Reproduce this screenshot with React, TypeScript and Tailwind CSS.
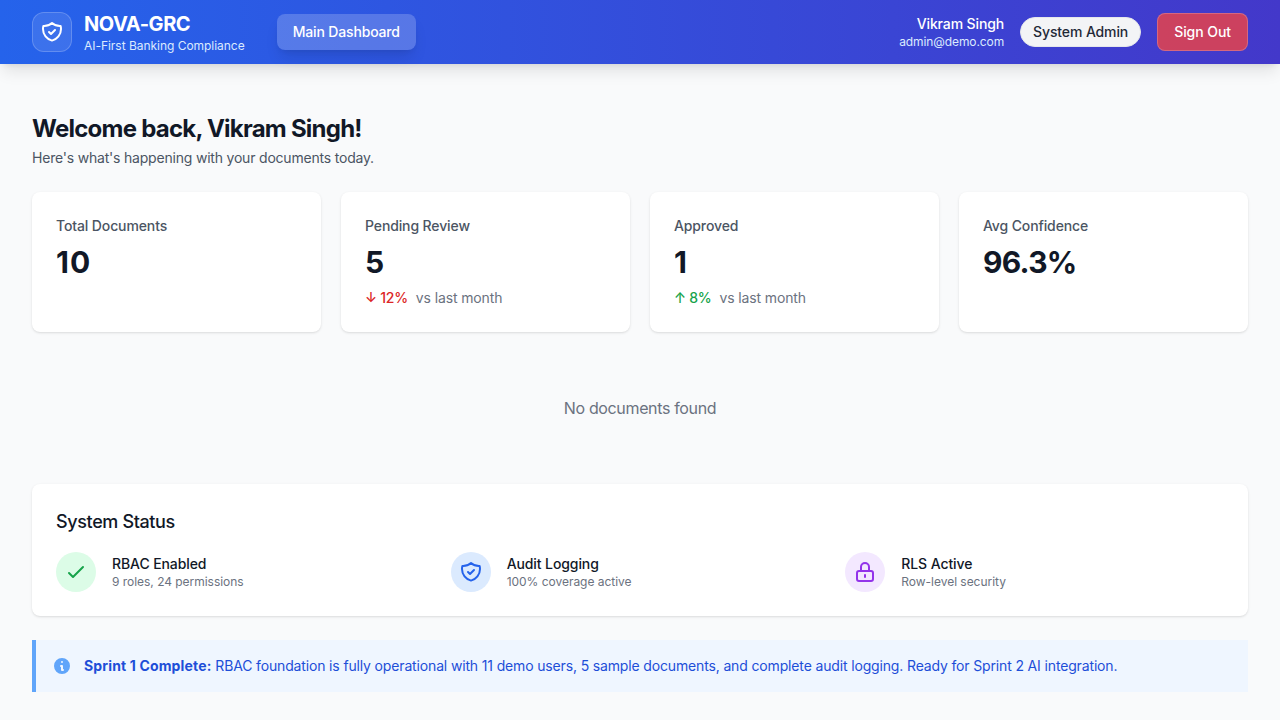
import type { ReactNode } from "react";

const SHIELD =
  "M9 12l2 2 4-4m5.618-4.016A11.955 11.955 0 0112 2.944a11.955 11.955 0 01-8.618 3.04A12.02 12.02 0 003 9c0 5.591 3.824 10.29 9 11.622 5.176-1.332 9-6.03 9-11.622 0-1.042-.133-2.052-.382-3.016z";
const CHECK = "M5 13l4 4L19 7";
const LOCK =
  "M12 15v2m-6 4h12a2 2 0 002-2v-6a2 2 0 00-2-2H6a2 2 0 00-2 2v6a2 2 0 002 2zm10-10V7a4 4 0 00-8 0v4h8z";

function OutlineIcon({ d, className }: { d: string; className: string }) {
  return (
    <svg className={`size-6 ${className}`} fill="none" stroke="currentColor" viewBox="0 0 24 24">
      <path d={d} strokeLinecap="round" strokeLinejoin="round" strokeWidth={2} />
    </svg>
  );
}

function Header() {
  return (
    <header className="flex h-16 items-center justify-between bg-linear-to-r/srgb from-[#2563eb] to-[#4338ca] px-8 shadow-lg">
      <div className="flex items-center">
        <div className="flex size-10 items-center justify-center rounded-xl border border-white/20 bg-white/10">
          <OutlineIcon d={SHIELD} className="text-white" />
        </div>
        <div className="ml-3">
          <div className="text-xl font-bold tracking-[-0.45px] text-white">NOVA-GRC</div>
          <div className="text-xs tracking-[-0.03px] text-[#dbeafe]">AI-First Banking Compliance</div>
        </div>
        <button className="ml-8 rounded-lg bg-white/20 px-4 py-2 text-sm font-[450] tracking-[-0.16px] text-white shadow-lg">
          Main Dashboard
        </button>
      </div>
      <div className="flex items-center gap-4">
        <div className="text-right">
          <div className="text-sm font-[450] tracking-[-0.12px] text-white">Vikram Singh</div>
          <div className="text-xs tracking-[-0.1px] text-[#dbeafe]">admin@demo.com</div>
        </div>
        <span className="rounded-full border border-[#e5e7eb] bg-[#f3f4f6] px-3 py-1 text-sm font-[450] tracking-[-0.12px] text-[#1f2937]">
          System Admin
        </span>
        <button className="rounded-lg border border-white/20 bg-[#ef4444]/80 px-4 py-2 text-sm font-[450] tracking-[-0.06px] text-white">
          Sign Out
        </button>
      </div>
    </header>
  );
}

type Trend = { up: boolean; value: string };

function StatCard({ label, value, tracking, trend }: { label: string; value: string; tracking: string; trend?: Trend }) {
  return (
    <div className="rounded-lg bg-white p-6 shadow-sm">
      <p className="text-sm font-[450] tracking-[-0.12px] text-[#4b5563]">{label}</p>
      <p className={`mt-2 text-3xl font-bold text-[#111827] ${tracking}`}>{value}</p>
      {trend && (
        <div className="mt-2 flex items-center text-sm">
          <span className={`font-[450] tracking-[-0.25px] ${trend.up ? "text-[#16a34a]" : "text-[#dc2626]"}`}>
            {trend.up ? "↑" : "↓"} {trend.value}
          </span>
          <span className="ml-2 tracking-[-0.13px] text-[#6b7280]">vs last month</span>
        </div>
      )}
    </div>
  );
}

function StatusItem({ title, detail, tint, children }: { title: string; detail: string; tint: string; children: ReactNode }) {
  return (
    <div className="flex items-center">
      <div className={`flex size-10 items-center justify-center rounded-full ${tint}`}>{children}</div>
      <div className="ml-4">
        <p className="text-sm font-[450] tracking-[-0.1px] text-[#111827]">{title}</p>
        <p className="text-xs tracking-[-0.03px] text-[#6b7280]">{detail}</p>
      </div>
    </div>
  );
}

export default function App() {
  return (
    <div className="h-screen overflow-hidden bg-[#f9fafb] font-['Inter',sans-serif]">
      <Header />
      <main className="px-8 pt-12">
        <h1 className="text-2xl leading-[34px] font-bold tracking-[-0.76px] text-[#111827]">
          Welcome back, Vikram Singh!
        </h1>
        <p className="mt-0.5 text-sm tracking-[-0.2px] text-[#4b5563]">
          Here's what's happening with your documents today.
        </p>

        <div className="mt-6 grid grid-cols-4 gap-5">
          <StatCard label="Total Documents" value="10" tracking="tracking-[1px]" />
          <StatCard label="Pending Review" value="5" tracking="tracking-normal" trend={{ up: false, value: "12%" }} />
          <StatCard label="Approved" value="1" tracking="tracking-normal" trend={{ up: true, value: "8%" }} />
          <StatCard label="Avg Confidence" value="96.3%" tracking="tracking-[-0.75px]" />
        </div>

        <p className="my-6 py-10 text-center text-base tracking-[-0.35px] text-[#6b7280]">No documents found</p>

        <section className="rounded-lg bg-white p-6 shadow-sm">
          <h2 className="text-lg font-[450] tracking-[-0.37px] text-[#111827]">System Status</h2>
          <div className="mt-4 grid grid-cols-3 gap-4">
            <StatusItem title="RBAC Enabled" detail="9 roles, 24 permissions" tint="bg-[#dcfce7]">
              <OutlineIcon d={CHECK} className="text-[#16a34a]" />
            </StatusItem>
            <StatusItem title="Audit Logging" detail="100% coverage active" tint="bg-[#dbeafe]">
              <OutlineIcon d={SHIELD} className="text-[#2563eb]" />
            </StatusItem>
            <StatusItem title="RLS Active" detail="Row-level security" tint="bg-[#f3e8ff]">
              <OutlineIcon d={LOCK} className="text-[#9333ea]" />
            </StatusItem>
          </div>
        </section>

        <div className="mt-6 flex items-center border-l-4 border-[#60a5fa] bg-[#eff6ff] p-4">
          <svg className="size-5 text-[#60a5fa]" viewBox="0 0 20 20" fill="currentColor">
            <path
              fillRule="evenodd"
              clipRule="evenodd"
              d="M18 10a8 8 0 11-16 0 8 8 0 0116 0zm-7-4a1 1 0 11-2 0 1 1 0 012 0zM9 9a1 1 0 000 2v3a1 1 0 001 1h1a1 1 0 100-2v-3a1 1 0 00-1-1H9z"
            />
          </svg>
          <p className="ml-3 text-sm tracking-[-0.15px] text-[#1d4ed8]">
            <strong className="font-bold tracking-[0.15px]">Sprint 1 Complete:</strong> RBAC foundation is fully
            operational with 11 demo users, 5 sample documents, and complete audit logging. Ready for Sprint 2 AI
            integration.
          </p>
        </div>
      </main>
    </div>
  );
}
